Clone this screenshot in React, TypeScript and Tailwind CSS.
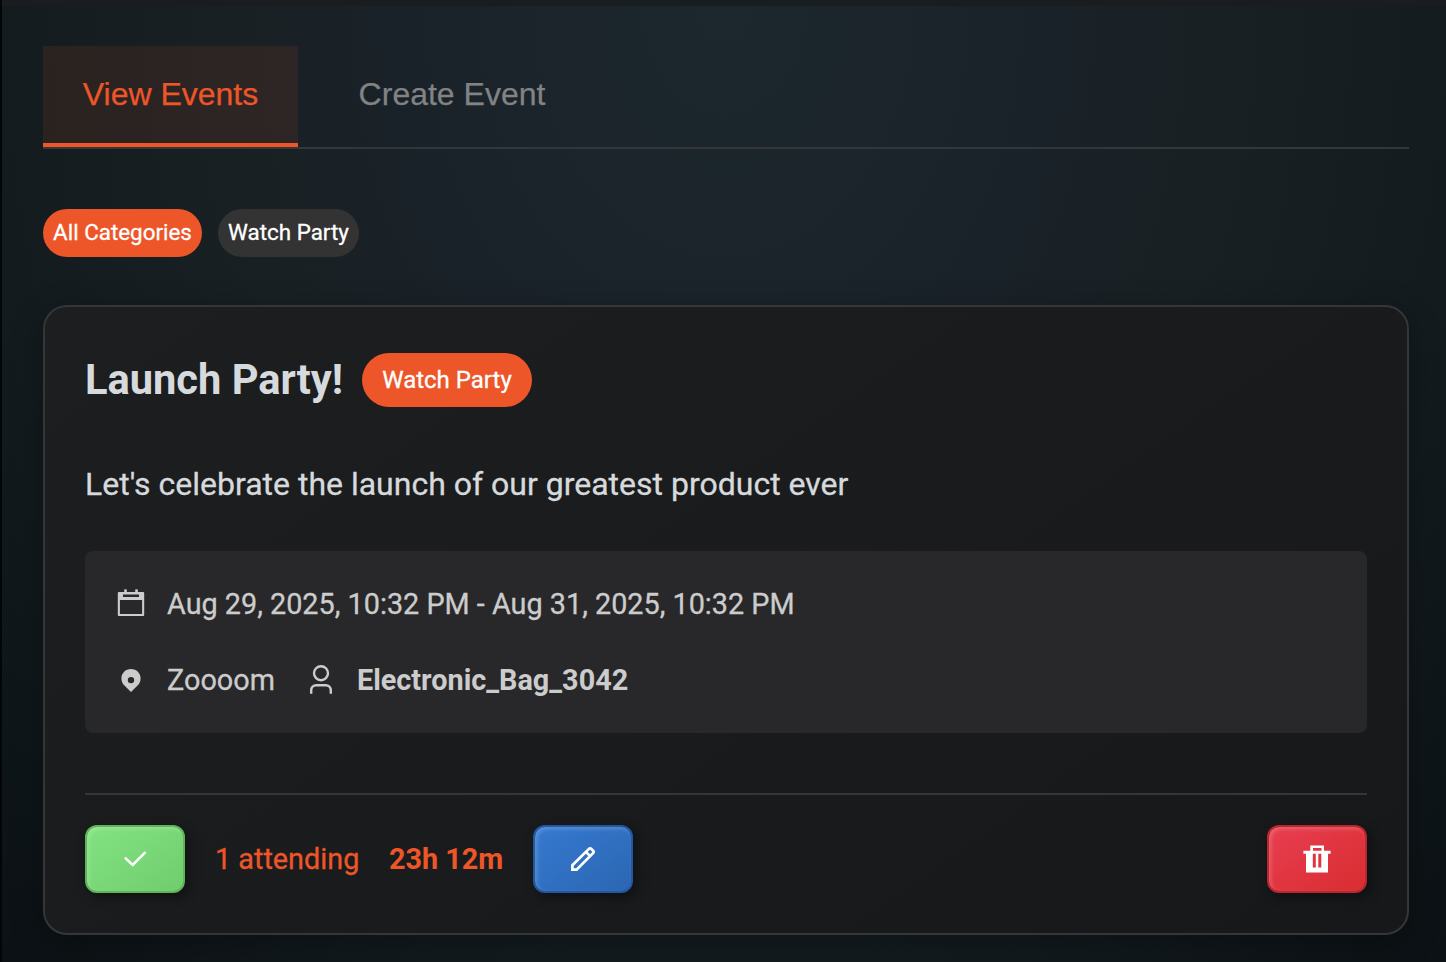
import type { ReactNode } from "react";

function CalendarIcon() {
  return (
    <svg width="28" height="28" viewBox="0 0 28 28" fill="currentColor" className="mb-0.5 shrink-0">
      <rect x="7.2" y="0.300" width="2.600" height="4" rx="0.800" />
      <rect x="18.200" y="0.300" width="2.600" height="4" rx="0.800" />
      <path
        fillRule="evenodd"
        d="M1.800 3h24.400a1 1 0 0 1 1 1v22a1 1 0 0 1-1 1H1.800a1 1 0 0 1-1-1V4a1 1 0 0 1 1-1ZM6 5.400v2.600h16V5.400ZM2.900 11v14h22.200V11Z"
      />
    </svg>
  );
}

function PinIcon() {
  return (
    <svg width="28" height="28" viewBox="0 0 28 28" fill="currentColor" className="shrink-0">
      <path
        fillRule="evenodd"
        d="M14 2.900c5.500 0 9.600 4.200 9.600 9.500 0 3.200-1.500 5.500-3.300 7.400L14 26l-6.300-6.200c-1.800-1.900-3.300-4.200-3.300-7.400C4.400 7.100 8.500 2.900 14 2.900ZM14 10.900a3.200 3.200 0 1 0 0 6.400 3.200 3.200 0 0 0 0-6.400Z"
      />
    </svg>
  );
}

function PersonIcon() {
  return (
    <svg width="28" height="30" viewBox="0 0 28 30" fill="none" stroke="currentColor" strokeWidth="2.400" className="shrink-0">
      <circle cx="14" cy="8.200" r="7" />
      <path d="M4.200 28.700v-3.500a5 5 0 0 1 5-5h9.600a5 5 0 0 1 5 5v3.500" />
    </svg>
  );
}

function CheckIcon() {
  return (
    <svg width="28" height="28" viewBox="0 0 28 28" fill="none" stroke="currentColor" strokeWidth="2.500">
      <path d="m3.900 12.700 7.800 7.300L24.500 7.100" />
    </svg>
  );
}

function PencilIcon() {
  return (
    <svg width="28" height="28" viewBox="0 0 28 28" fill="none" stroke="currentColor" strokeWidth="2.700">
      <path d="M3.400 20.300 19.900 3.900q1.200-1.200 2.400 0l1.800 1.800q1.200 1.200 0 2.400L7.600 24.600H3.400Z" />
      <path d="m16.900 6.900 4.200 4.200" />
    </svg>
  );
}

function TrashIcon() {
  return (
    <svg width="28" height="28" viewBox="0 0 28 28" fill="currentColor">
      <path
        fillRule="evenodd"
        d="M7.300 0.600h13.700v5.200h6.600v2.900H25v18.900H3V8.700H0.400V5.800h6.900ZM10 3v2.800h8.500V3ZM9.800 8.700v13.700h3V8.700Zm5.500 0v13.700h3V8.700Z"
      />
    </svg>
  );
}

function ActionButton({ label, className, children }: { label: string; className: string; children: ReactNode }) {
  return (
    <button
      aria-label={label}
      className={`flex h-[68px] w-[100px] items-center justify-center rounded-xl border-2 text-white ${className}`}
    >
      {children}
    </button>
  );
}

export default function App() {
  return (
    <div className="h-[962px] w-full overflow-hidden border-l-2 border-[#030506] bg-[#0c1114] font-['Roboto',sans-serif]">
      <div className="h-[6px] bg-[#1a1d1f]" />
      <main className="h-[956px] bg-[radial-gradient(ellipse_at_top,#1c282d_0%,#1a2229_32%,#182023_50%,#131b1e_73%,#0b1114_100%)] pt-10 pr-[37px] pl-[41px]">
        <nav className="flex h-[103px] gap-5 border-b-2 border-[#343638] font-['Liberation_Sans',Arial,sans-serif] text-[32px] [-webkit-text-stroke:0.25px]">
          <button className="h-[101px] w-[255px] border-b-4 border-[#ec5629] bg-[#ec5629]/10 pb-0.5 text-[#ec5629]">
            View Events
          </button>
          <button className="h-[101px] w-[268px] border-b-4 border-transparent pb-0.5 text-[#818384]">Create Event</button>
        </nav>

        <div className="mt-[60px] flex gap-4 text-[22.4px] text-white [-webkit-text-stroke:0.3px]">
          <button className="h-12 w-[159px] rounded-full bg-[#ec5629] whitespace-nowrap">All Categories</button>
          <button className="h-12 w-[141px] rounded-full bg-[#333333] whitespace-nowrap">Watch Party</button>
        </div>

        <article className="mt-12 h-[630px] rounded-3xl border-2 border-[#343638] bg-[linear-gradient(145deg,#1d1e20,#17181a)] px-10 pt-[46px] shadow-[0_8px_32px_rgba(0,0,0,0.3)]">
          <header className="flex h-[54px] items-center gap-5">
            <h2 className="w-[257px] text-[41.6px] font-bold whitespace-nowrap text-[#d7dadc]">Launch Party!</h2>
            <span className="flex h-[54px] w-[170px] items-center justify-center rounded-full bg-[#ec5629] text-[24px] whitespace-nowrap text-white [-webkit-text-stroke:0.3px]">
              Watch Party
            </span>
          </header>

          <p className="mt-[52px] h-[50px] text-[32px] leading-[50px] text-[#d7dadc] [-webkit-text-stroke:0.3px]">
            Let's celebrate the launch of our greatest product ever
          </p>

          <section className="mt-[42px] flex h-[182px] flex-col gap-8 rounded-lg bg-[#28282a] px-8 pt-[31px] text-[28.8px] text-[#cccccc]">
            <div className="flex h-11 items-center gap-[22px]">
              <CalendarIcon />
              <span className="pt-0.5 [-webkit-text-stroke:0.3px]">Aug 29, 2025, 10:32 PM - Aug 31, 2025, 10:32 PM</span>
            </div>
            <div className="flex h-11 items-center">
              <PinIcon />
              <span className="ml-[22px] w-[140px] pt-0.5 [-webkit-text-stroke:0.3px]">Zoooom</span>
              <PersonIcon />
              <strong className="ml-[22px] pt-0.5 font-bold">Electronic_Bag_3042</strong>
            </div>
          </section>

          <footer className="mt-[60px] flex items-center border-t-2 border-[#343638] pt-[30px] text-[28.8px] text-[#ec5629]">
            <ActionButton
              label="Attend"
              className="border-[#5fb457] bg-[linear-gradient(145deg,#82e281,#70cd6d)] shadow-[4px_4px_12px_rgba(0,0,0,0.4),inset_2px_2px_4px_rgba(255,255,255,0.2)]"
            >
              <CheckIcon />
            </ActionButton>
            <span className="ml-[30px] w-[174px] pt-0.5 [-webkit-text-stroke:0.3px]">1 attending</span>
            <strong className="w-[144px] pt-0.5 font-bold">23h 12m</strong>
            <ActionButton
              label="Edit event"
              className="border-[#2357a1] bg-[linear-gradient(145deg,#3679d0,#2b66b2)] shadow-[4px_4px_12px_rgba(0,0,0,0.4),inset_2px_2px_4px_rgba(255,255,255,0.2)]"
            >
              <PencilIcon />
            </ActionButton>
            <div className="ml-auto">
              <ActionButton
                label="Delete event"
                className="border-[#b7272d] bg-[linear-gradient(145deg,#e83e50,#d92d31)] shadow-[4px_4px_12px_rgba(0,0,0,0.4),inset_2px_2px_4px_rgba(255,255,255,0.2)]"
              >
                <TrashIcon />
              </ActionButton>
            </div>
          </footer>
        </article>
      </main>
    </div>
  );
}
